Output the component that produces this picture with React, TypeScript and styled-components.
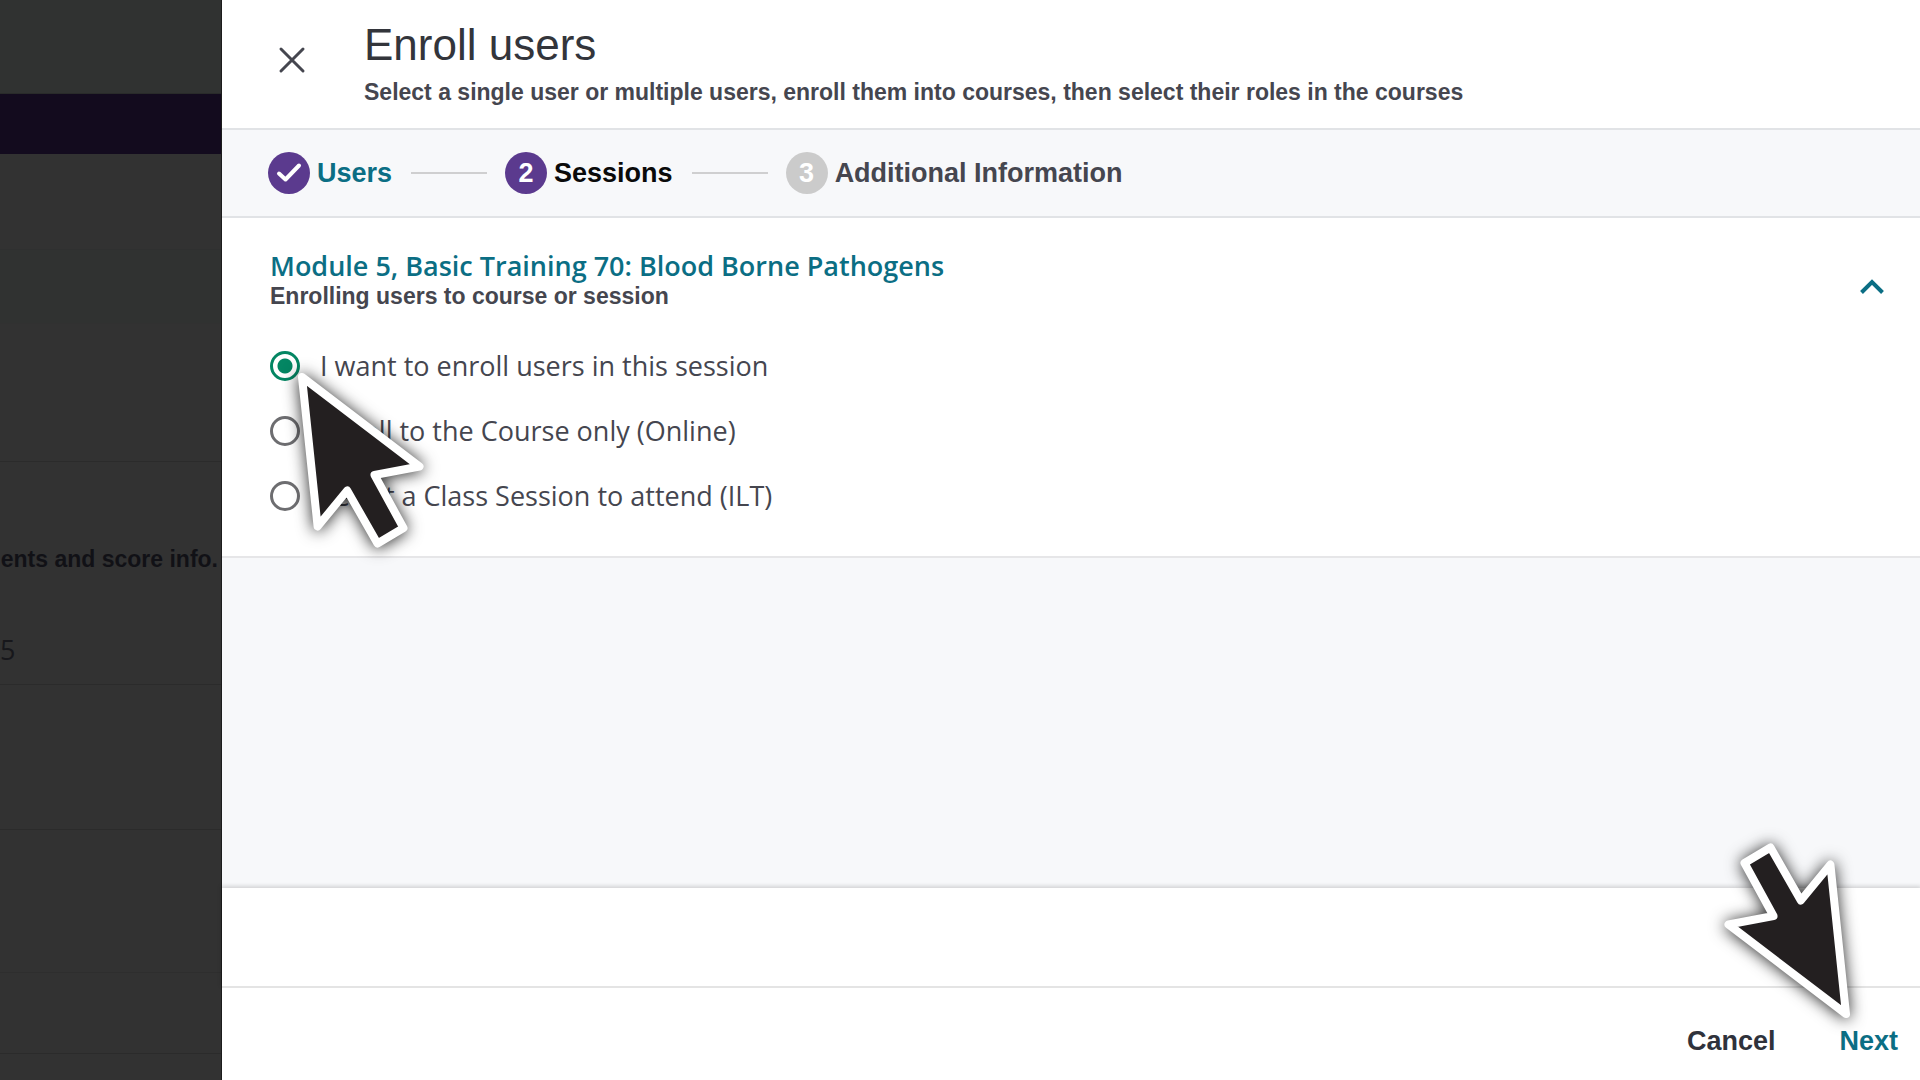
import React, { useState } from 'react';
import styled, { createGlobalStyle } from 'styled-components';

const teal = '#0b6e84';
const ink = '#45464f';
const mist = '#f7f8fa';
const sans = '"Liberation Sans", Arial, sans-serif';
const humanist = '"Open Sans", "Noto Sans", sans-serif';

const GlobalStyle = createGlobalStyle`
  *, *::before, *::after { box-sizing: border-box; }
  body { margin: 0; background: #323232; font-family: ${sans}; }
  h1, h2, p, ol { margin: 0; padding: 0; }
`;

const Shell = styled.div`
  display: grid;
  grid-template-columns: 222px minmax(0, 1fr);
  min-height: 100vh;
  overflow: hidden;
`;

const Underlay = styled.aside`
  display: flex;
  flex-direction: column;
  min-width: 0;
  overflow: hidden;
  background: #323232;
  border-right: 1px solid #1c1c1c;
`;

const Strip = styled.div<{ $height: number; $tone?: string; $line?: string }>`
  display: flex;
  align-items: flex-end;
  flex: none;
  height: ${(p) => p.$height}px;
  background: ${(p) => p.$tone ?? 'transparent'};
  border-bottom: 1px solid ${(p) => p.$line ?? '#2b2b2b'};
`;

const ScoreCell = styled.div`
  display: flex;
  flex-direction: column;
  justify-content: space-between;
  flex: none;
  height: 223px;
  padding: 83px 3px 16px 0;
  border-bottom: 1px solid #2b2b2b;
`;

const ScoreNote = styled.p`
  align-self: flex-end;
  color: #111116;
  font-size: 23px;
  font-weight: 700;
  line-height: 28px;
  white-space: nowrap;
`;

const ScoreValue = styled.p`
  color: #17171b;
  font-family: ${humanist};
  font-size: 27px;
  line-height: 36px;
`;

const Drawer = styled.main`
  display: flex;
  flex-direction: column;
  min-width: 0;
  background: #fff;
`;

const Header = styled.header`
  display: flex;
  align-items: flex-start;
  gap: 48px;
  padding: 15px 46px 22px;
  border-bottom: 2px solid #e1e3e6;
`;

const HeaderText = styled.div`
  display: grid;
  gap: 3px;
`;

const IconButton = styled.button`
  display: grid;
  place-items: center;
  flex: none;
  width: 48px;
  height: 48px;
  padding: 0;
  border: 0;
  background: none;
  color: ${(p) => p.color ?? ink};
  cursor: pointer;
`;

const CloseButton = styled(IconButton)`
  margin-top: 21px;
`;

const Title = styled.h1`
  color: #33353b;
  font-size: 44px;
  font-weight: 400;
  line-height: 60px;
`;

const Note = styled.p`
  color: ${ink};
  font-size: 23px;
  font-weight: 700;
  line-height: 28px;
`;

const Steps = styled.ol`
  display: flex;
  align-items: center;
  padding: 22px 46px;
  background: ${mist};
  border-bottom: 2px solid #e1e3e6;
  list-style: none;
`;

const Step = styled.li<{ $color: string }>`
  display: flex;
  align-items: center;
  gap: 7px;
  color: ${(p) => p.$color};
  font-size: 27px;
  font-weight: 700;
  line-height: 42px;
  white-space: nowrap;

  &:not(:first-child)::before {
    content: '';
    width: 76px;
    height: 2px;
    margin: 0 11px 0 19px;
    background: #cfcfd0;
  }
`;

const Badge = styled.span<{ $fill: string }>`
  display: grid;
  place-items: center;
  width: 42px;
  height: 42px;
  border-radius: 50%;
  background: ${(p) => p.$fill};
  color: #fff;
`;

const StepLink = styled.a`
  color: ${teal};
  text-decoration: none;
`;

const Course = styled.section`
  padding: 32px 24px 40px 48px;
  border-bottom: 2px solid #e6e6e8;
`;

const CourseHead = styled.div`
  display: flex;
  align-items: flex-end;
  justify-content: space-between;
`;

const CourseTitle = styled.h2`
  color: ${teal};
  font-family: ${humanist};
  font-size: 27px;
  font-weight: 600;
  line-height: 32px;
`;

const Choices = styled.fieldset`
  display: grid;
  justify-content: start;
  gap: 25px;
  margin: 36px 0 0;
  padding: 0;
  border: 0;
`;

const Choice = styled.label`
  position: relative;
  display: flex;
  align-items: center;
  gap: 20px;
  color: ${ink};
  font-family: ${humanist};
  font-size: 27px;
  line-height: 40px;
  white-space: nowrap;
`;

const Radio = styled.input`
  appearance: none;
  width: 30px;
  height: 30px;
  margin: 0;
  border: 3px solid #6d6d70;
  border-radius: 50%;
  background: #fff;

  &:checked {
    border-color: #048663;
    background: radial-gradient(circle, #048663 7px, #fff 8px);
  }
`;

const Filler = styled.div`
  flex: 1;
  background: ${mist};
`;

const Tray = styled.div`
  position: relative;
  height: 98px;
  background: #fff;
  box-shadow: 0 -1px 4px 1px rgba(0, 0, 0, 0.15);
`;

const Footer = styled.footer`
  position: relative;
  display: flex;
  justify-content: flex-end;
  gap: 64px;
  padding: 35px 22px 21px;
  background: #fff;
  border-top: 2px solid #e4e4e4;
`;

const TextButton = styled.button<{ $color: string }>`
  position: relative;
  padding: 0;
  border: 0;
  background: none;
  color: ${(p) => p.$color};
  font-family: ${sans};
  font-size: 27px;
  font-weight: 700;
  line-height: 36px;
  cursor: pointer;
`;

const Pointer = styled.svg<{ $left: number; $top: number }>`
  position: absolute;
  z-index: 2;
  left: ${(p) => p.$left}px;
  top: ${(p) => p.$top}px;
  width: 160px;
  height: 190px;
  overflow: visible;
  pointer-events: none;
  filter: drop-shadow(0 1px 8px rgba(0, 0, 0, 0.85));
`;

type Aim = 'up-left' | 'down-right';

function BigPointer({ aim, left, top }: { aim: Aim; left: number; top: number }) {
  return (
    <Pointer $left={left} $top={top} viewBox="0 0 160 190" aria-hidden="true">
      <path
        d="M20 12 L137.5 101.5 L92.5 110 L121.5 163 L95.5 178.5 L65.2 125.5 L35.6 161.5 Z"
        transform={aim === 'down-right' ? 'rotate(180 80 95)' : undefined}
        fill="#231f20"
        stroke="#fff"
        strokeWidth="8"
        strokeLinejoin="round"
      />
    </Pointer>
  );
}

const options = [
  'I want to enroll users in this session',
  'Enroll to the Course only (Online)',
  'Select a Class Session to attend (ILT)',
];

export default function App() {
  const [picked, setPicked] = useState(0);

  return (
    <>
      <GlobalStyle />
      <Shell>
        <Underlay>
          <Strip $height={94} $tone="#303231" $line="#292b2a" />
          <Strip $height={60} $tone="#130b1e" $line="#130b1e" />
          <Strip $height={96} $line="#2f3030" />
          <Strip $height={74} $tone="#303231" $line="#313131" />
          <Strip $height={138} />
          <ScoreCell>
            <ScoreNote>ents and score info.</ScoreNote>
            <ScoreValue>5</ScoreValue>
          </ScoreCell>
          <Strip $height={145} />
          <Strip $height={143} $line="#2e2e2e" />
          <Strip $height={81} />
        </Underlay>

        <Drawer>
          <Header>
            <CloseButton type="button" aria-label="Close">
              <svg width="28" height="28" viewBox="0 0 28 28" fill="none" stroke="currentColor" strokeWidth="3" strokeLinecap="round">
                <path d="M3 3 L25 25 M25 3 L3 25" />
              </svg>
            </CloseButton>
            <HeaderText>
              <Title>Enroll users</Title>
              <Note>
                Select a single user or multiple users, enroll them into courses, then select their roles in the courses
              </Note>
            </HeaderText>
          </Header>

          <Steps>
            <Step $color={teal}>
              <Badge $fill="#5b3a8e">
                <svg width="26" height="22" viewBox="0 0 26 22" fill="none" stroke="currentColor" strokeWidth="4" strokeLinecap="round" strokeLinejoin="round">
                  <path d="M3 11.5 L9.5 17.5 L23 3.5" />
                </svg>
              </Badge>
              <StepLink href="#users">Users</StepLink>
            </Step>
            <Step $color="#0a0a0a" aria-current="step">
              <Badge $fill="#5b3a8e">2</Badge>
              Sessions
            </Step>
            <Step $color={ink}>
              <Badge $fill="#cbcbcb">3</Badge>
              Additional Information
            </Step>
          </Steps>

          <Course>
            <CourseHead>
              <div>
                <CourseTitle>Module 5, Basic Training 70: Blood Borne Pathogens</CourseTitle>
                <Note>Enrolling users to course or session</Note>
              </div>
              <IconButton type="button" color={teal} aria-label="Collapse course" aria-expanded="true">
                <svg width="26" height="18" viewBox="0 0 26 18" fill="none" stroke="currentColor" strokeWidth="4">
                  <path d="M2.5 15.5 L13 5 L23.5 15.5" />
                </svg>
              </IconButton>
            </CourseHead>
            <Choices aria-label="Enrollment type">
              {options.map((text, i) => (
                <Choice key={text}>
                  <Radio type="radio" name="enrollment" checked={picked === i} onChange={() => setPicked(i)} />
                  {text}
                  {i === 0 && <BigPointer aim="up-left" left={12} top={19} />}
                </Choice>
              ))}
            </Choices>
          </Course>

          <Filler />
          <Tray />
          <Footer>
            <TextButton type="button" $color="#2f323b">
              Cancel
            </TextButton>
            <TextButton type="button" $color={teal}>
              Next
              <BigPointer aim="down-right" left={-133} top={-187} />
            </TextButton>
          </Footer>
        </Drawer>
      </Shell>
    </>
  );
}
